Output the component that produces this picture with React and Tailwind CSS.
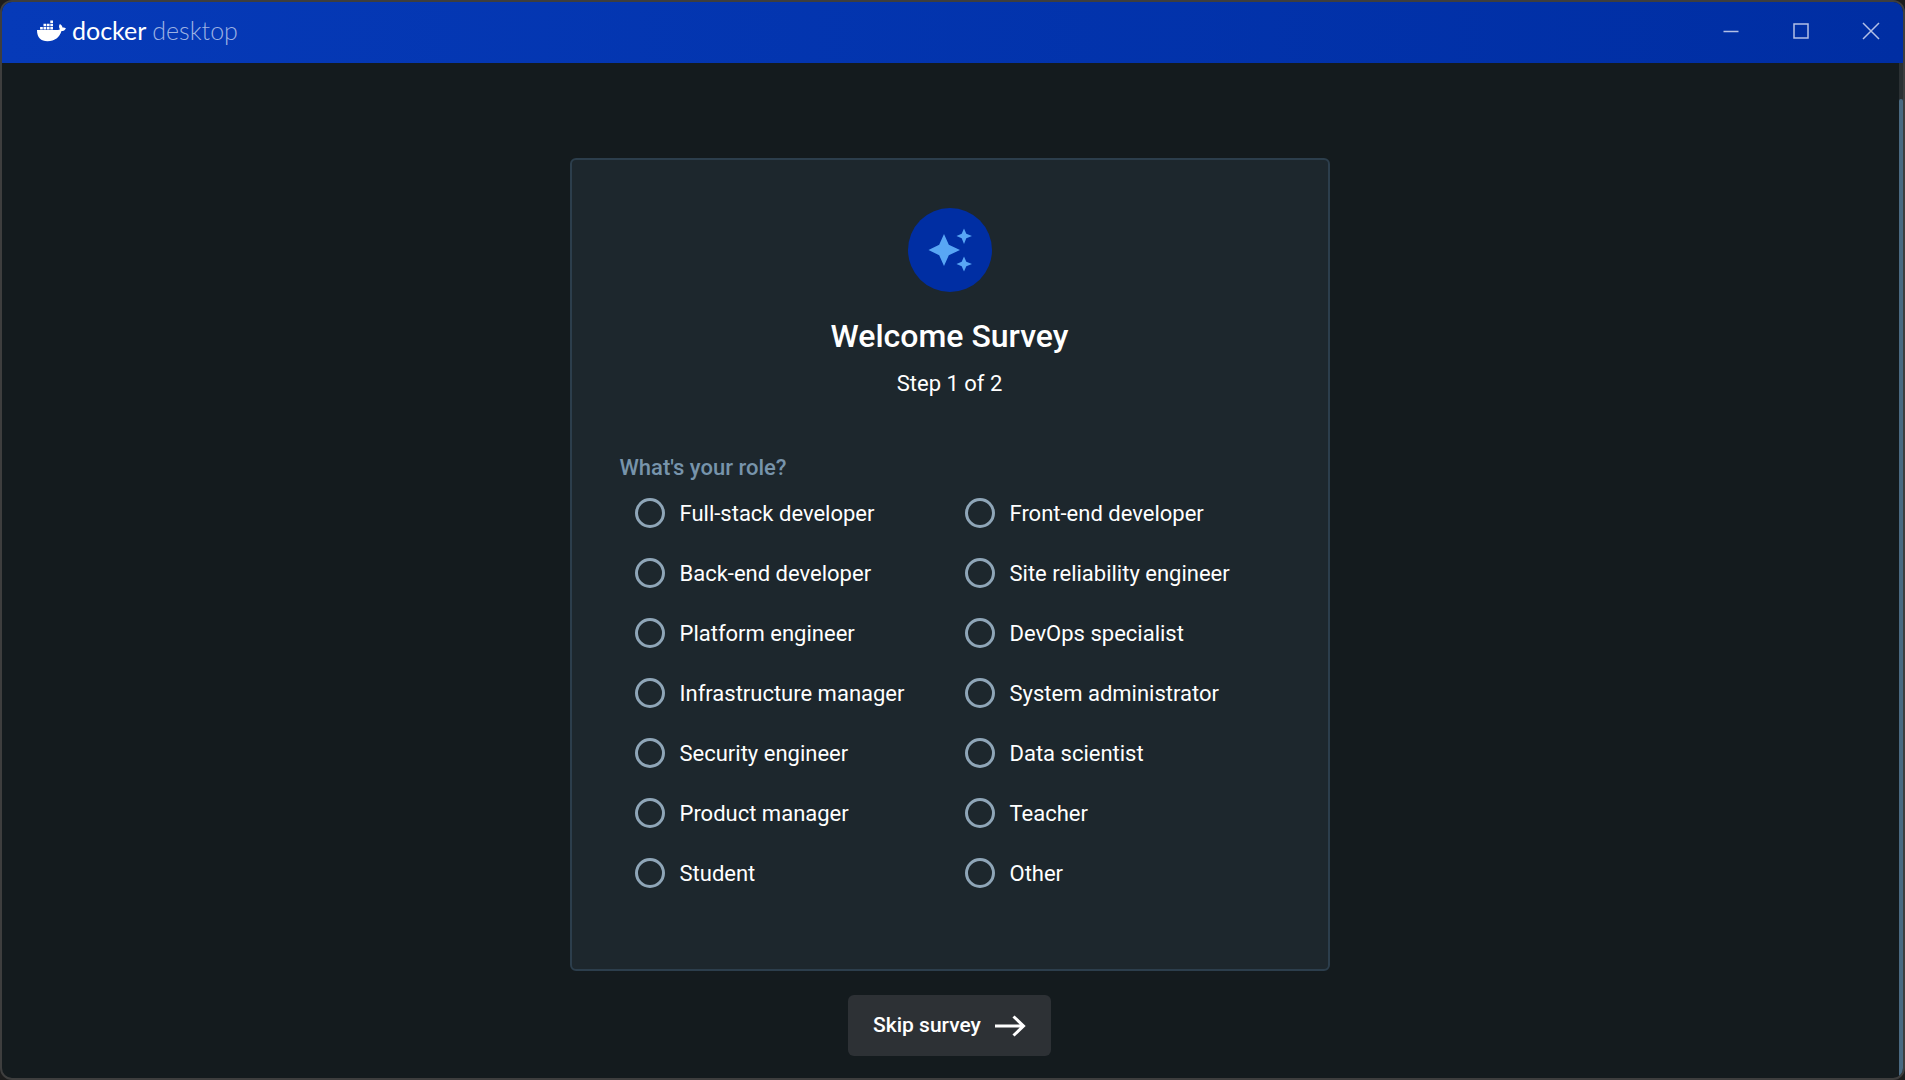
const roles = [
  "Full-stack developer",
  "Front-end developer",
  "Back-end developer",
  "Site reliability engineer",
  "Platform engineer",
  "DevOps specialist",
  "Infrastructure manager",
  "System administrator",
  "Security engineer",
  "Data scientist",
  "Product manager",
  "Teacher",
  "Student",
  "Other",
];

function Whale() {
  return (
    <svg width="30" height="22" viewBox="0 0 30 22" fill="#fff" aria-hidden="true">
      <path d="M0 10h20c1.500 0 2.500-.3 3-.8-1.200-1.500-1.300-3.700-.1-5.200 1.500.9 2.400 2.200 2.600 3.600 1.200-.2 2.400 0 3.400.600-.8 1.900-2.300 2.900-4.400 2.900C22.500 17.500 18 21.200 10.500 21.200 4 21.200 0 17.600 0 10z" />
      <path d="M3.100 6.900h2.700v2.600H3.100zM6.500 6.900h2.700v2.600H6.500zM9.900 6.900h2.700v2.600H9.900zM13.300 6.900H16v2.600h-2.700zM6.500 3.700h2.700v2.600H6.500zM9.900 3.700h2.700v2.600H9.900zM13.300 3.700H16v2.600h-2.700zM13.300.4H16V3h-2.700z" />
    </svg>
  );
}

function TitleBar() {
  return (
    <header className="flex h-[61px] items-center justify-between bg-gradient-to-r from-[#063ab8] to-[#002ea3] pb-1 pl-[35px]">
      <div className="flex items-center gap-[5px]">
        <Whale />
        <p className="pb-[2px] font-[Lato,sans-serif] text-[25px] leading-8 text-white">
          docker <span className="font-light text-[#9db2e3]">desktop</span>
        </p>
      </div>
      <div className="flex gap-10 pr-[17px] text-[#b3c0e6]">
        <button aria-label="Minimize" className="grid size-[30px] place-items-center">
          <svg width="16" height="16" stroke="currentColor" strokeWidth="1.500"><path d="M0.500 8.500h15" /></svg>
        </button>
        <button aria-label="Maximize" className="grid size-[30px] place-items-center">
          <svg width="16" height="16" fill="none" stroke="currentColor" strokeWidth="1.500"><path d="M1 1h14v14H1z" /></svg>
        </button>
        <button aria-label="Close" className="grid size-[30px] place-items-center">
          <svg width="18" height="18" stroke="currentColor" strokeWidth="1.500"><path d="M1 1l16 16M17 1L1 17" /></svg>
        </button>
      </div>
    </header>
  );
}

function Sparkles() {
  return (
    <div className="grid size-[84px] place-items-center rounded-full bg-[#002ea3]">
      <svg width="44" height="44" viewBox="0 0 44 44" fill="#58a6f5" aria-hidden="true">
        <path d="M16 6l4.800 10.800L32 22l-11.200 5.200L16 38l-4.800-10.800L.5 22l10.700-5.200z" />
        <path d="M36 .5l2.300 5.200L44 8l-5.700 2.300L36 16l-2.300-5.700L28.500 8l5.200-2.300zM36 28.500l2.300 5.200L44 36l-5.700 2.300L36 43.500l-2.300-5.200L28.500 36l5.200-2.300z" />
      </svg>
    </div>
  );
}

export default function App() {
  return (
    <div className="bg-[#1d1d1d] font-[Roboto,sans-serif]">
      <div className="flex min-h-screen flex-col overflow-hidden rounded-xl border-2 border-[#3e3e3e] bg-[#141b1e]">
        <TitleBar />
        <div className="flex flex-1">
          <main className="flex flex-1 flex-col items-center pt-[95px] pr-[26px] pb-[22px] pl-6">
            <form className="flex w-full max-w-[760px] flex-1 flex-col rounded-md border-2 border-[#2c3e4c] bg-[#1d272d] p-12">
              <div className="flex flex-col items-center text-white">
                <Sparkles />
                <h1 className="mt-6 text-[32px] leading-10 font-medium">Welcome Survey</h1>
                <p className="mt-3 text-[22px] leading-8">Step 1 of 2</p>
              </div>
              <fieldset className="mt-[52px]">
                <legend className="text-[22px] leading-[31px] font-medium text-[#7794ab]">What's your role?</legend>
                <div className="grid grid-cols-2">
                  {roles.map((role) => (
                    <label key={role} className="flex h-[60px] items-center gap-[15px] pl-[15px] text-[22px] text-white">
                      <input
                        type="radio"
                        name="role"
                        value={role}
                        className="size-[30px] appearance-none rounded-full border-3 border-[#8fa6b8] checked:bg-[#58a6f5]"
                      />
                      {role}
                    </label>
                  ))}
                </div>
              </fieldset>
            </form>
            <button className="mt-6 flex h-[61px] items-center gap-[14px] rounded-md bg-[#2d3135] px-[25px] text-[21px] font-medium text-white">
              Skip survey
              <svg width="31" height="22" viewBox="0 0 31 22" fill="none" stroke="currentColor" strokeWidth="3" aria-hidden="true">
                <path d="M0 11h28M18.500 1.500L28.500 11l-10 9.500" />
              </svg>
            </button>
          </main>
          <div className="flex w-1 flex-col bg-[#2b3134] pt-9">
            <div className="flex-1 rounded-t-sm bg-[#4a6a82]" />
          </div>
        </div>
      </div>
    </div>
  );
}
